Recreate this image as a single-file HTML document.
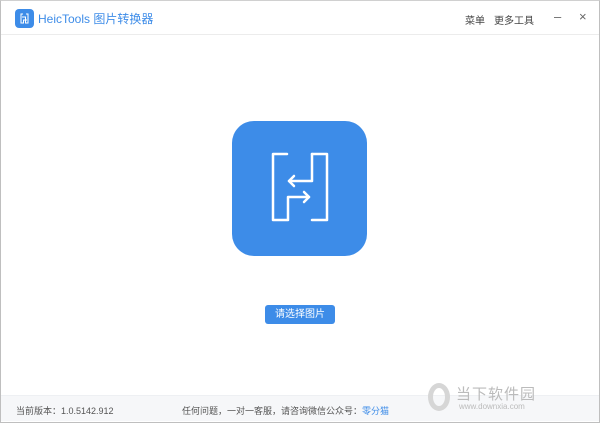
<!DOCTYPE html>
<html><head><meta charset="utf-8"><style>
*{margin:0;padding:0;box-sizing:border-box}
body{width:600px;height:423px;background:#fff;font-family:"Liberation Sans","Noto Sans CJK SC",sans-serif;position:relative;overflow:hidden}
.win{position:absolute;left:0;top:0;width:600px;height:423px;border:1px solid #bfbfbf;border-top-color:#d0d0d0}
.title{position:absolute;left:1px;top:1px;width:598px;height:34px;border-bottom:1px solid #ececec}
.logo{position:absolute;left:14px;top:8px;width:19px;height:19px;background:#3d8ce8;border-radius:4px}
.tt{position:absolute;left:37px;top:9px;font-size:12px;color:#3d8ce8}
.menu{position:absolute;top:11px;font-size:10px;color:#444}
.foot{position:absolute;left:1px;top:395px;width:598px;height:26px;background:#f6f7f9;border-top:1px solid #eef0f3}
.ft{position:absolute;top:8px;font-size:9px;color:#555}
.btn{position:absolute;left:265px;top:305px;width:70px;height:19px;background:#3d8ce8;border-radius:3px;color:#fff;font-size:10px;text-align:center;line-height:19px}
</style></head><body>
<div class="win"></div>
<div class="title">
<div class="logo"><svg width="19" height="19" viewBox="0 0 19 19" fill="none" stroke="#fff" stroke-width="1"><path d="M8 5H6V14H8.5V11H12"/><path d="M11 5H13V14H10.5V8H7"/></svg></div>
<div class="tt">HeicTools 图片转换器</div>
<div class="menu" style="left:464px">菜单</div>
<div class="menu" style="left:493px">更多工具</div>
<div class="menu" style="left:553px;top:8px;font-size:13px;color:#666">–</div>
<div class="menu" style="left:578px;top:8px;font-size:13px;color:#666">×</div>
</div>
<svg style="position:absolute;left:0;top:0" width="600" height="423">
<rect x="232" y="121" width="135" height="135" rx="22" fill="#3d8ce8"/>
<g fill="none" stroke="#fff" stroke-width="2.5" stroke-linecap="round" stroke-linejoin="round">
<path d="M287 154H273V220H288V197H309"/>
<path d="M304 192L309 197L304 202"/>
<path d="M312 154H327V220H312"/>
<path d="M312 154V181H289"/>
<path d="M294 176L289 181L294 186"/>
</g>
</svg>
<div class="btn">请选择图片</div>
<div class="foot">
<div class="ft" style="left:15px">当前版本：1.0.5142.912</div>
<div class="ft" style="left:181px">任何问题，一对一客服，请咨询微信公众号：<span style="color:#3d8ce8">零分猫</span></div>
<div style="position:absolute;left:427px;top:-13px;width:22px;height:28px;border:5px solid #d6d6d6;border-radius:50%"></div>
<div style="position:absolute;left:455px;top:-13px;font-size:15px;color:#bbb;letter-spacing:1px">当下软件园</div>
<div style="position:absolute;left:458px;top:6px;font-size:8px;color:#bbb">www.downxia.com</div>
</div>
</body></html>
